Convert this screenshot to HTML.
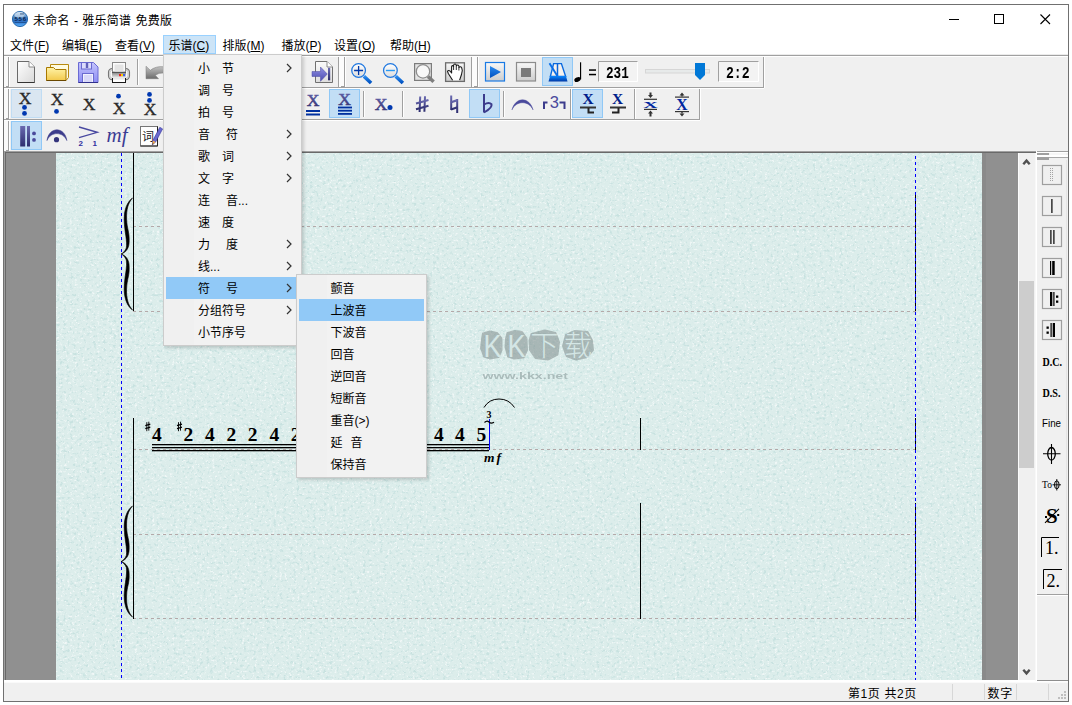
<!DOCTYPE html>
<html><head><meta charset="utf-8"><title>未命名 - 雅乐简谱 免费版</title>
<style>
*{box-sizing:border-box;margin:0;padding:0}
html,body{width:1072px;height:705px;overflow:hidden;background:#fff}
body{position:relative;font-family:"Liberation Sans","Noto Sans CJK SC",sans-serif;font-size:12px;color:#000}
#win{position:absolute;left:3px;top:4px;width:1066px;height:698px;border:1px solid #707070;background:#fff}
#root div,#root span,#root svg{position:absolute}
#root{position:absolute;left:0;top:0;width:1072px;height:705px}
.t{white-space:nowrap;line-height:16px;height:16px}
u{text-decoration:underline;text-underline-offset:1px}
i{font-style:normal;display:inline-block}
#root .menu i{position:static}
.menu{background:#f2f2f2;border:1px solid #ccc;box-shadow:2px 2px 3px rgba(0,0,0,.16)}
.mi{left:34px;white-space:nowrap;line-height:22px;height:22px}
.arr{width:6px;height:10px}
</style></head><body>
<div id="win"></div>
<div id="root">
<svg id="base" width="1072" height="705" viewBox="0 0 1072 705" style="left:0;top:0">
<defs>
<linearGradient id="gPur" x1="0" y1="0" x2="0" y2="1"><stop offset="0" stop-color="#6a6ab0"/><stop offset="1" stop-color="#2c2c6e"/></linearGradient>
<linearGradient id="gBlue" x1="0" y1="0" x2="0" y2="1"><stop offset="0" stop-color="#2a8cf0"/><stop offset="1" stop-color="#0050c0"/></linearGradient>
<linearGradient id="gPage" x1="0" y1="0" x2="1" y2="1"><stop offset="0" stop-color="#ffffff"/><stop offset="1" stop-color="#d8d8d8"/></linearGradient>
<linearGradient id="gFold" x1="0" y1="0" x2="0" y2="1"><stop offset="0" stop-color="#fff3a8"/><stop offset="1" stop-color="#f2c94c"/></linearGradient>
<linearGradient id="gSave" x1="0" y1="0" x2="0" y2="1"><stop offset="0" stop-color="#c4c4fc"/><stop offset="1" stop-color="#8c8cf4"/></linearGradient>
<linearGradient id="gGray" x1="0" y1="0" x2="0" y2="1"><stop offset="0" stop-color="#f8f8f8"/><stop offset="1" stop-color="#cdcdcd"/></linearGradient>
<linearGradient id="gPanel" x1="0" y1="0" x2="0" y2="1"><stop offset="0" stop-color="#7c7c7c"/><stop offset="1" stop-color="#e8e8e8"/></linearGradient><linearGradient id="gUndo" x1="0" y1="0" x2="0" y2="1"><stop offset="0" stop-color="#c4c4c4"/><stop offset="1" stop-color="#6c6c6c"/></linearGradient><linearGradient id="gPage2" x1="0" y1="0" x2="0" y2="1"><stop offset="0" stop-color="#fafafa"/><stop offset="1" stop-color="#dedede"/></linearGradient><linearGradient id="gPur2" x1="0" y1="0" x2="0" y2="1"><stop offset="0" stop-color="#9090e4"/><stop offset="1" stop-color="#4c4cb0"/></linearGradient><linearGradient id="gGlass" x1="0" y1="0" x2="0" y2="1"><stop offset="0" stop-color="#ffffff"/><stop offset="1" stop-color="#dcdcdc"/></linearGradient><linearGradient id="gBall2" x1="0" y1="0" x2="0" y2="1"><stop offset="0" stop-color="#b4d0ea"/><stop offset=".42" stop-color="#4c86c4"/><stop offset=".62" stop-color="#2c6cc0"/><stop offset="1" stop-color="#58b0ff"/></linearGradient><linearGradient id="gBlue2" x1="0" y1="0" x2="0" y2="1"><stop offset="0" stop-color="#0a88ff"/><stop offset="1" stop-color="#0036a4"/></linearGradient><radialGradient id="gBall" cx="0.4" cy="0.3" r="0.7"><stop offset="0" stop-color="#8ec4f0"/><stop offset="0.6" stop-color="#2f6fb8"/><stop offset="1" stop-color="#153a78"/></radialGradient>
<filter id="paperF" x="0" y="0" width="100%" height="100%"><feTurbulence type="fractalNoise" baseFrequency="0.3 0.34" numOctaves="3" seed="7" result="n"/><feColorMatrix in="n" type="matrix" values="0 0 0 0 0.56  0 0 0 0 0.75  0 0 0 0 0.74  0 0 0 5 -2.8"/></filter>
<filter id="paperL" x="0" y="0" width="100%" height="100%"><feTurbulence type="fractalNoise" baseFrequency="0.4 0.45" numOctaves="3" seed="21" result="n"/><feColorMatrix in="n" type="matrix" values="0 0 0 0 1  0 0 0 0 1  0 0 0 0 1  0 0 0 5 -2.9"/></filter>
</defs>

<rect x="4" y="55" width="1064" height="647" fill="#f0f0f0"/>
<rect x="4" y="54" width="1064" height="1" fill="#ebebeb"/>
<rect x="4" y="55" width="1064" height="1" fill="#a0a0a0"/>
<rect x="4" y="56" width="1064" height="1" fill="#ffffff"/>
<rect x="4" y="87" width="760" height="1" fill="#a0a0a0"/>
<rect x="4" y="88" width="760" height="1" fill="#ffffff"/>
<rect x="4" y="119" width="696" height="1" fill="#a0a0a0"/>
<rect x="4" y="120" width="696" height="1" fill="#ffffff"/>
<rect x="4" y="57" width="4" height="30" fill="#fafafa"/>
<rect x="8" y="57" width="1" height="30" fill="#a0a0a0"/>
<rect x="9" y="57" width="1" height="30" fill="#ffffff"/>
<rect x="6" y="86" width="2" height="1" fill="#a0a0a0"/>
<rect x="4" y="89" width="4" height="30" fill="#fafafa"/>
<rect x="8" y="89" width="1" height="30" fill="#a0a0a0"/>
<rect x="9" y="89" width="1" height="30" fill="#ffffff"/>
<rect x="6" y="118" width="2" height="1" fill="#a0a0a0"/>
<rect x="4" y="121" width="4" height="30" fill="#fafafa"/>
<rect x="8" y="121" width="1" height="30" fill="#a0a0a0"/>
<rect x="9" y="121" width="1" height="30" fill="#ffffff"/>
<rect x="6" y="150" width="2" height="1" fill="#a0a0a0"/>
<rect x="338" y="57" width="1" height="30" fill="#a0a0a0"/>
<rect x="339" y="57" width="5" height="30" fill="#fcfcfc"/>
<rect x="344" y="57" width="1" height="30" fill="#a0a0a0"/>
<rect x="345" y="57" width="1" height="30" fill="#ffffff"/>
<rect x="341" y="86" width="3" height="1" fill="#a0a0a0"/>
<rect x="471" y="57" width="1" height="30" fill="#a0a0a0"/>
<rect x="472" y="57" width="5" height="30" fill="#fcfcfc"/>
<rect x="477" y="57" width="1" height="30" fill="#a0a0a0"/>
<rect x="478" y="57" width="1" height="30" fill="#ffffff"/>
<rect x="474" y="86" width="3" height="1" fill="#a0a0a0"/>
<rect x="763" y="57" width="1" height="31" fill="#a0a0a0"/>
<rect x="764" y="57" width="1" height="31" fill="#ffffff"/>
<rect x="570" y="89" width="1" height="30" fill="#a0a0a0"/>
<rect x="571" y="89" width="1" height="30" fill="#ffffff"/>
<rect x="634" y="89" width="1" height="30" fill="#a0a0a0"/>
<rect x="635" y="89" width="1" height="30" fill="#ffffff"/>
<rect x="699" y="89" width="1" height="31" fill="#a0a0a0"/>
<rect x="700" y="89" width="1" height="31" fill="#ffffff"/>
<rect x="137" y="59" width="1" height="26" fill="#a0a0a0"/>
<rect x="138" y="59" width="1" height="26" fill="#ffffff"/>
<rect x="363" y="91" width="1" height="26" fill="#a0a0a0"/>
<rect x="364" y="91" width="1" height="26" fill="#ffffff"/>
<rect x="402" y="91" width="1" height="26" fill="#a0a0a0"/>
<rect x="403" y="91" width="1" height="26" fill="#ffffff"/>
<rect x="503" y="91" width="1" height="26" fill="#a0a0a0"/>
<rect x="504" y="91" width="1" height="26" fill="#ffffff"/>
<rect x="11.5" y="89.5" width="30" height="28" fill="#dae6f1" stroke="#c0dcf3"/>
<rect x="329.5" y="89.5" width="30" height="28" fill="#c2def5" stroke="#90c8f6"/>
<rect x="469.5" y="89.5" width="30" height="28" fill="#c2def5" stroke="#90c8f6"/>
<rect x="572.5" y="89.5" width="30" height="28" fill="#c2def5" stroke="#90c8f6"/>
<rect x="11.5" y="121.5" width="30" height="28" fill="#c2def5" stroke="#90c8f6"/>
<rect x="542.5" y="57.5" width="30" height="28" fill="#c2def5" stroke="#90c8f6"/>
<path d="M17.5 61.5h11.5l5.5 5.5v15.5h-17z" fill="url(#gPage)" stroke="#6a6a6a"/><path d="M29 61.5v5.5h5.5" fill="#fff" stroke="#8a8a8a"/><path d="M17.5 82.5h17" stroke="#333" fill="none"/>
<path d="M50.5 64.5h18v13l-2.5 3h-15.5z" fill="#fffbe0" stroke="#b88a10"/><path d="M46.5 67.5h7l2 2h10.5v11h-19.5z" fill="url(#gFold)" stroke="#a87800"/><path d="M46.5 80.5h19.5" stroke="#6a4800" fill="none"/>
<path d="M78.5 62.5h15l4.5 4.5v15.5h-19.5z" fill="url(#gSave)" stroke="#6a6ad4"/><rect x="81.5" y="62.5" width="10" height="6.5" fill="#dcdcfc" stroke="#6a6ad0"/><rect x="85.8" y="63" width="2.4" height="5" fill="#6060b8"/><rect x="82.5" y="73.5" width="11" height="9" fill="#f0f0fe" stroke="#6a6ad0"/><rect x="84" y="75" width="8" height="7" fill="#d8d8f8"/><path d="M78.5 82.5h19.5" stroke="#30308c" fill="none"/>
<rect x="108.6" y="68.6" width="20.8" height="11" rx="3.5" fill="#fafafa" stroke="#787878" stroke-width="1.3"/><rect x="110" y="70" width="18" height="8.2" rx="2.3" fill="none" stroke="#c4c4c4"/><rect x="112.5" y="62.5" width="13" height="9.5" fill="#fcfcfc" stroke="#8a8a8a"/><rect x="114.5" y="64.5" width="9" height="7" fill="#e4e4e4"/><rect x="112" y="72" width="14" height="5.6" fill="url(#gPanel)"/><rect x="112" y="72" width="14" height="1" fill="#555"/><rect x="119" y="74" width="2" height="2.2" fill="#f02020"/><rect x="121" y="74" width="2" height="2.2" fill="#f8d000"/><rect x="123" y="74" width="2" height="2.2" fill="#4060e8"/><rect x="112.5" y="78.5" width="13" height="4" fill="#fff" stroke="#1a1a1a"/><rect x="113" y="78" width="12" height="1.5" fill="#e8e8e8"/>
<path d="M146 66.2V78.7H158.5L155.3 75.2Q159 72.5 164 73V66.8Q156 65.8 150.3 70.3z" fill="url(#gUndo)" stroke="#7a7a7a" stroke-width=".5"/>
<path d="M315.5 61.5h11.5l5.5 5.5v15.5h-17z" fill="url(#gPage2)" stroke="#707070"/><path d="M327 61.5v5.5h5.5" fill="#fff" stroke="#8a8a8a"/><path d="M312 71.5h8.5v-4.5l6.8 7-6.8 7.3v-4.8h-8.5z" fill="url(#gPur2)" stroke="#4a4aa0" stroke-width=".5"/><rect x="328" y="67.8" width="2.2" height="12.5" fill="url(#gPur)"/>
<path d="M363.90000000000003 76.3l7.2 6.7" stroke="url(#gBlue)" stroke-width="3.6" stroke-linecap="butt" fill="none"/><circle cx="358.6" cy="70.5" r="6.85" fill="url(#gGlass)" stroke="#2078e0" stroke-width="1.25"/><path d="M354.1 70.5h9M358.6 66v9" stroke="#0038a8" stroke-width="1.3" fill="none"/>
<path d="M395.7 76.3l7.2 6.7" stroke="url(#gBlue)" stroke-width="3.6" stroke-linecap="butt" fill="none"/><circle cx="390.4" cy="70.5" r="6.85" fill="url(#gGlass)" stroke="#2078e0" stroke-width="1.25"/><path d="M385.9 70.5h9" stroke="#2a9af4" stroke-width="1.4" fill="none"/>
<rect x="414.6" y="63.6" width="16.8" height="16.8" fill="#e4e4e4" stroke="#7c7c7c" stroke-width="1.2"/><path d="M428 76.5l5.6 5.2" stroke="#7e7e7e" stroke-width="3.6" fill="none"/><circle cx="423" cy="71.4" r="6.7" fill="#f8f8f8" stroke="#8e8e8e" stroke-width="1.3"/>
<rect x="445.6" y="62.8" width="18.8" height="18.6" fill="url(#gGray)" stroke="#6c6c6c" stroke-width="1.3"/><path d="M452.6 80.2L448.3 73.5L447.5 71.2Q448.5 69.8 450 71L451.6 73V66.6Q452.4 64.8 453.6 66.4V65Q455 63 456.3 65V65.8Q457.6 64 458.9 66V67.5Q460.4 66 461.7 67.8L462.3 70.5L461.5 74.5L459.6 80.2" fill="#fff" stroke="#1a1a1a" stroke-width="1.1" stroke-linejoin="round"/><path d="M453.6 66.4V70M456.3 65.8V70M458.9 67.5V70.5" stroke="#1a1a1a" stroke-width=".9" fill="none"/>
<rect x="485.5" y="62.5" width="19" height="18.5" fill="url(#gGray)" stroke="#1a7ae4" stroke-width="1.2"/><path d="M490 66l11 6-11 6z" fill="url(#gBlue)"/>
<rect x="516.5" y="62.5" width="19" height="18.5" fill="url(#gGray)" stroke="#8c8c8c" stroke-width="1.2"/><rect x="521" y="68" width="10" height="9" fill="#7a7a7a"/>
<path d="M553.6 63.6h7.8l4.2 12.8h-15.2z" fill="#f6f2ee" stroke="#0a6ae0" stroke-width="1.4"/><path d="M557.5 63.5v13" stroke="#0a64d8" stroke-width="1.5"/><path d="M550 76h16l1.5 5.6h-19z" fill="url(#gBlue2)"/><path d="M549.5 63.3l8 13" stroke="#0a6ee8" stroke-width="1.9"/>
<rect x="580" y="62.3" width="1.15" height="17" fill="#000"/><ellipse cx="577.5" cy="79.5" rx="3.3" ry="2.25" transform="rotate(-25 577.5 79.5)" fill="#000"/><rect x="589" y="69.3" width="7" height="1.5" fill="#000"/><rect x="589" y="73.8" width="7" height="1.5" fill="#000"/>
<rect x="598" y="61" width="40" height="21" fill="#f3f3f3"/><path d="M598.5 82V61.5H638" stroke="#a0a0a0" fill="none"/><path d="M598.5 81.5H637.5V61.5" stroke="#fff" fill="none"/>
<rect x="718" y="61" width="41" height="21" fill="#f3f3f3"/><path d="M718.5 82V61.5H759" stroke="#a0a0a0" fill="none"/><path d="M718.5 81.5H758.5V61.5" stroke="#fff" fill="none"/>
<rect x="645.5" y="69.5" width="64" height="3.5" fill="#e7eaea" stroke="#d6d6d6"/><path d="M695 63h10v12l-5 5-5-5z" fill="#0078d7"/>
<text transform="translate(25,103.8) scale(1.1,1)" font-family="Liberation Serif,serif" font-size="16" font-weight="normal" text-anchor="middle" fill="#2a2a2a" stroke="#2a2a2a" stroke-width="0.35" >X</text>
<circle cx="24.5" cy="107.4" r="2.4" fill="#0038b0"/>
<circle cx="24.5" cy="113.4" r="2.4" fill="#0038b0"/>
<text transform="translate(57,104.8) scale(1.1,1)" font-family="Liberation Serif,serif" font-size="16" font-weight="normal" text-anchor="middle" fill="#2a2a2a" stroke="#2a2a2a" stroke-width="0.35" >X</text>
<circle cx="56.5" cy="111.4" r="2.4" fill="#0038b0"/>
<text transform="translate(89,109.6) scale(1.1,1)" font-family="Liberation Serif,serif" font-size="16" font-weight="normal" text-anchor="middle" fill="#2a2a2a" stroke="#2a2a2a" stroke-width="0.35" >X</text>
<text transform="translate(119,114) scale(1.1,1)" font-family="Liberation Serif,serif" font-size="16" font-weight="normal" text-anchor="middle" fill="#2a2a2a" stroke="#2a2a2a" stroke-width="0.35" >X</text>
<circle cx="118.5" cy="96.2" r="2.4" fill="#0038b0"/>
<text transform="translate(150,115) scale(1.1,1)" font-family="Liberation Serif,serif" font-size="16" font-weight="normal" text-anchor="middle" fill="#2a2a2a" stroke="#2a2a2a" stroke-width="0.35" >X</text>
<circle cx="149.5" cy="94.4" r="2.4" fill="#0038b0"/>
<circle cx="149.5" cy="100.4" r="2.4" fill="#0038b0"/>
<text transform="translate(313,105.5) scale(1,1)" font-family="Liberation Serif,serif" font-size="17.5" font-weight="normal" text-anchor="middle" fill="url(#gPur)" stroke="url(#gPur)" stroke-width="0.55" >X</text>
<rect x="306" y="110" width="14" height="2" fill="#0030a0"/><rect x="306" y="113.5" width="14" height="2" fill="#0030a0"/>
<text transform="translate(344.5,105) scale(1,1)" font-family="Liberation Serif,serif" font-size="17.5" font-weight="normal" text-anchor="middle" fill="url(#gPur)" stroke="url(#gPur)" stroke-width="0.55" >X</text>
<rect x="338" y="106.6" width="14" height="1.8" fill="#0030a0"/><rect x="338" y="109.8" width="14" height="1.8" fill="#0030a0"/><rect x="338" y="113" width="14" height="1.8" fill="#0030a0"/>
<text transform="translate(381,109.6) scale(1,1)" font-family="Liberation Serif,serif" font-size="17.5" font-weight="normal" text-anchor="middle" fill="url(#gPur)" stroke="url(#gPur)" stroke-width="0.55" >X</text>
<circle cx="390" cy="107.4" r="2.5" fill="#0038b0"/>
<g stroke="url(#gPur)" stroke-width="2" fill="none"><path d="M420.2 96.5l-.6 15.5M425 96.2l-.6 15.5"/><path d="M416 103.5l12.5-3.5M416 109.3l12.5-3.5" stroke-width="2.2"/></g>
<g stroke="url(#gPur)" stroke-width="2" fill="none"><path d="M451.2 95.5v14.5M457.2 99v14"/><path d="M451 102.3l6.4-2.2M451 109.5l6.4-2.2" stroke-width="2.2"/></g>
<path d="M484 94v18.5" stroke="#3c3c8c" stroke-width="2" fill="none"/><path d="M484 104.5q5-3 7.5-.3q1 3.5-7.5 8.3" stroke="#3c3c8c" stroke-width="2" fill="none"/>
<path d="M512 109.8C515.5 96.5 529.5 96.5 533 109.8C529 100.3 516 100.3 512 109.8z" fill="#4a4a9c" stroke="#4a4a9c" stroke-width=".5"/>
<path d="M544 109v-6.5h3.5M559.5 102.5h5v6.5" stroke="#3c3c8c" stroke-width="2" fill="none"/>
<text x="554.3" y="108" font-family="Liberation Sans,sans-serif" font-size="16.5" text-anchor="middle" fill="#4a4a9c">3</text>
<text transform="translate(588,104) scale(1,1)" font-family="Liberation Serif,serif" font-size="15.5" font-weight="bold" text-anchor="middle" fill="#00208a" stroke="#00208a" stroke-width="0" >X</text>
<rect x="580" y="106.5" width="16" height="2" fill="#333"/><path d="M588.5 108v4.5h5.5" stroke="#222" stroke-width="2" fill="none"/>
<text transform="translate(617.6,104) scale(1,1)" font-family="Liberation Serif,serif" font-size="15.5" font-weight="bold" text-anchor="middle" fill="#00208a" stroke="#00208a" stroke-width="0" >X</text>
<rect x="610" y="106.5" width="16" height="2" fill="#333"/><path d="M618.5 108v4.5h-6.5" stroke="#222" stroke-width="2" fill="none"/>
<rect x="644" y="98.7" width="13" height="1.2" fill="#333"/><rect x="644" y="108.8" width="13" height="1.2" fill="#333"/><text x="650.5" y="115.8" font-family="Liberation Serif,serif" font-size="16" font-weight="bold" text-anchor="middle" fill="#0028a0" transform="translate(-162.6,47.8) scale(1.25,0.52)">X</text><path d="M649.5 92.5h2v2.5h1.5l-2.5 3-2.5-3h1.5zM649.5 116.5h2v-3h1.5l-2.5-3-2.5 3h1.5z" fill="#333"/>
<rect x="675" y="96.5" width="14" height="1.2" fill="#333"/><rect x="675" y="111" width="14" height="1.2" fill="#333"/><text x="682" y="110.3" font-family="Liberation Serif,serif" font-size="17.5" font-weight="bold" text-anchor="middle" fill="#0028a0" transform="translate(68.2,0) scale(0.9,1)">X</text><path d="M682 92.5l2.5 3h-5zM682 116.5l2.5-3h-5z" fill="#333"/><rect x="681.3" y="95" width="1.4" height="1.5" fill="#333"/><rect x="681.3" y="112" width="1.4" height="1.5" fill="#333"/>
<rect x="20.2" y="126" width="5" height="20.5" fill="url(#gPur)"/><rect x="27" y="126" width="3" height="20.5" fill="url(#gPur)"/>
<circle cx="34" cy="133.4" r="1.9" fill="#4a4a9c"/>
<circle cx="34" cy="139.9" r="1.9" fill="#4a4a9c"/>
<path d="M47 140.5C49 126.3 64.8 126.3 66.8 140.5C63 131.3 50.8 131.3 47 140.5z" fill="#3c3c8c" stroke="#3c3c8c" stroke-width=".6"/>
<circle cx="56.5" cy="139.7" r="2.6" fill="#34347c"/>
<path d="M79 127l18.3 5.3-18.3 5.3" stroke="#4848a0" stroke-width="1.35" fill="none"/>
<text x="78.5" y="146.2" font-family="Liberation Sans,sans-serif" font-size="8" font-weight="bold" fill="#3030a0">2</text><text x="92.5" y="146.2" font-family="Liberation Sans,sans-serif" font-size="8" font-weight="bold" fill="#3030a0">1</text>
<text x="106.5" y="142" font-family="Liberation Serif,serif" font-size="21" font-style="italic" fill="#3c3c94">mf</text>
<rect x="140.5" y="126.5" width="17" height="19.5" fill="#fff" stroke="#777"/><path d="M140.5 146h17v-19.5" stroke="#222" fill="none"/><text x="142" y="141" font-family="Noto Sans CJK SC,sans-serif" font-size="12" fill="#222">词</text><path d="M159.8 127.3l2.8 1.6-7 13.2-3.3 2.8.5-4.3z" fill="#6a6ad0" stroke="#34349a" stroke-width=".6"/><path d="M152.3 144.9l.5-4.3 2.8 1.5z" fill="#f0a848"/><path d="M152.3 144.9l.2-1.7 1.1.6z" fill="#333"/>
<rect x="4" y="151" width="1032" height="1" fill="#a0a0a0"/>
<rect x="5" y="152" width="1031" height="1" fill="#696969"/>
<rect x="4" y="151" width="1" height="530" fill="#a0a0a0"/>
<rect x="5" y="152" width="1" height="528" fill="#696969"/>
<rect x="6" y="153" width="1012" height="527" fill="#909090"/>
<rect x="982" y="153" width="4" height="527" fill="#8a8a8a"/>
<rect x="56" y="153" width="926" height="527" fill="#dcedeb"/>
<rect x="56" y="153" width="926" height="527" filter="url(#paperF)" opacity="0.85"/>
<rect x="56" y="153" width="926" height="527" filter="url(#paperL)" opacity="0.6"/>
<rect x="4" y="680" width="1064" height="1" fill="#fff"/>
<rect x="4" y="681" width="1064" height="1" fill="#fff"/>
<rect x="4" y="682" width="1064" height="1" fill="#fafafa"/>
<rect x="1037" y="680" width="31" height="1" fill="#8e8e8e"/>
<path d="M133 226.5H916" stroke="#b4a9a9" stroke-dasharray="3 3" fill="none"/>
<path d="M133 311.5H916" stroke="#b4a9a9" stroke-dasharray="3 3" fill="none"/>
<path d="M133 449.5H916" stroke="#b4a9a9" stroke-dasharray="3 3" fill="none"/>
<path d="M133 534.5H916" stroke="#b4a9a9" stroke-dasharray="3 3" fill="none"/>
<path d="M133 618.5H916" stroke="#b4a9a9" stroke-dasharray="3 3" fill="none"/>
<rect x="133" y="153" width="1" height="158" fill="#000"/>
<rect x="133" y="418" width="1" height="201" fill="#000"/>
<rect x="915" y="192" width="1" height="119" fill="#000"/>
<rect x="915" y="418" width="1" height="32" fill="#000"/>
<rect x="915" y="503" width="1" height="116" fill="#000"/>
<rect x="640" y="418" width="1" height="32" fill="#000"/>
<rect x="640" y="503" width="1" height="116" fill="#000"/>
<path d="M121.5 153V680" stroke="#0000ff" stroke-dasharray="3 3" fill="none"/>
<path d="M915.5 156V680" stroke="#0000ff" stroke-dasharray="3 3" fill="none"/>
<path d="M132.5 198 C127 202 124 210 124.2 220 C124.5 232 127.5 241 126.3 248 C125.3 251 123 253 121.2 254 C124.5 252.8 128.3 250 129 244 C130 232 127 230 126.6 219 C126.3 210 128 203 132.5 198z M132.5 310 C127 306 124 298 124.2 288 C124.5 276 127.5 267 126.3 260 C125.3 257 123 255 121.2 254 C124.5 255.2 128.3 258 129 264 C130 276 127 278 126.6 289 C126.3 298 128 305 132.5 310z" fill="#000" stroke="#000" stroke-width=".6"/>
<path d="M132.5 506 C127 510 124 518 124.2 528 C124.5 539.5 127.5 548.5 126.3 555.5 C125.3 558.5 123 560.5 121.2 561.5 C124.5 560.3 128.3 557.5 129 551.5 C130 539.5 127 538 126.6 527 C126.3 518 128 511 132.5 506z M132.5 617 C127 613 124 605 124.2 595 C124.5 583.5 127.5 574.5 126.3 567.5 C125.3 564.5 123 562.5 121.2 561.5 C124.5 562.7 128.3 565.5 129 571.5 C130 583.5 127 585 126.6 596 C126.3 605 128 612 132.5 617z" fill="#000" stroke="#000" stroke-width=".6"/>
<text x="152" y="440.5" font-family="Liberation Serif,serif" font-size="19.5" font-weight="bold" fill="#000">4</text>
<text x="183.5" y="440.5" font-family="Liberation Serif,serif" font-size="19.5" font-weight="bold" fill="#000">2</text>
<text x="205" y="440.5" font-family="Liberation Serif,serif" font-size="19.5" font-weight="bold" fill="#000">4</text>
<text x="226.5" y="440.5" font-family="Liberation Serif,serif" font-size="19.5" font-weight="bold" fill="#000">2</text>
<text x="247.8" y="440.5" font-family="Liberation Serif,serif" font-size="19.5" font-weight="bold" fill="#000">2</text>
<text x="269.5" y="440.5" font-family="Liberation Serif,serif" font-size="19.5" font-weight="bold" fill="#000">4</text>
<text x="290.8" y="440.5" font-family="Liberation Serif,serif" font-size="19.5" font-weight="bold" fill="#000">2</text>
<text x="434" y="440.5" font-family="Liberation Serif,serif" font-size="19.5" font-weight="bold" fill="#000">4</text>
<text x="455" y="440.5" font-family="Liberation Serif,serif" font-size="19.5" font-weight="bold" fill="#000">4</text>
<text x="476.5" y="440.5" font-family="Liberation Serif,serif" font-size="19.5" font-weight="bold" fill="#000">5</text>
<g stroke="#000" fill="none"><path d="M146.8 422.2v9M148.8 421.7v9" stroke-width=".9"/><path d="M145.3 425.7l5-1.5M145.3 428.7l5-1.5" stroke-width="1.3"/></g>
<g stroke="#000" fill="none"><path d="M178.5 422.2v9M180.5 421.7v9" stroke-width=".9"/><path d="M177 425.7l5-1.5M177 428.7l5-1.5" stroke-width="1.3"/></g>
<rect x="152" y="444" width="337" height="1.3" fill="#000"/>
<rect x="152" y="447" width="337" height="1.3" fill="#000"/>
<rect x="152" y="450" width="337" height="1.3" fill="#000"/>
<rect x="489" y="419" width="1" height="31" fill="#0000ff"/>
<path d="M484 407.5q5-8.5 15-8.5t15.5 8.5" stroke="#000" stroke-width="1" fill="none"/>
<text x="486.5" y="417.8" font-family="Liberation Serif,serif" font-size="10" font-weight="bold" fill="#000">3</text>
<path d="M484.5 422.5q2.5-2.5 4.5-.5t5 .2" stroke="#000" stroke-width="1.2" fill="none"/>
<text x="484" y="462" font-family="Liberation Serif,serif" font-size="13.5" font-weight="bold" font-style="italic" fill="#000" letter-spacing="2">mf</text>
<g fill="#7f8c8c" opacity="0.55" stroke="#7f8c8c" stroke-width="2" stroke-linejoin="round"><path d="M483 333.5L490 331.5L497 333L501.5 338.5L501.5 350L498.5 357L490 358.5L484 356.5L481 348L482 339z"/><path d="M507.5 333L515 331L522 332L526.5 338.5L527 350L523.5 357.5L514 358.5L508 356.5L505.5 347L506 338.5z"/><path d="M531.5 334L545 330.5L555.5 333L559 342L557.5 354.5L548 359.5L535.5 358L530 350L529.5 340.5z"/><path d="M566 335L575 331L587.5 332L592 340.5L593 350L587.5 357L576 359.5L566.5 356L563 346z"/></g>
<g fill="#d4e6e5" font-family="Liberation Sans,Noto Sans CJK SC,sans-serif"><text x="483.5" y="356.5" font-size="32" textLength="18" lengthAdjust="spacingAndGlyphs">K</text><text x="507.5" y="356.5" font-size="32" textLength="18" lengthAdjust="spacingAndGlyphs">K</text><text x="530.5" y="355.5" font-size="28" font-weight="300">下</text><text x="564" y="355.5" font-size="28" font-weight="300">载</text></g>
<text x="482.5" y="378.8" font-family="Liberation Sans,sans-serif" font-size="9.5" font-weight="bold" fill="#8a9c9c" opacity=".6" textLength="85.5" lengthAdjust="spacingAndGlyphs">www.kkx.net</text>
<rect x="1018" y="153" width="18" height="527" fill="#f0f0f0"/><rect x="1018" y="153" width="1" height="527" fill="#fcfcfc"/>
<rect x="1019" y="281" width="15" height="187" fill="#cdcdcd"/>
<path d="M1023.3 164.2L1026.5 160.6L1029.7 164.2M1023.3 669.8L1026.5 673.4L1029.7 669.8" stroke="#505050" stroke-width="2.4" stroke-linejoin="miter" fill="none"/>
<rect x="1036" y="151" width="1" height="530" fill="#fff"/>
<rect x="1035" y="153" width="1" height="528" fill="#f8f8f8"/>
<rect x="1037" y="151" width="31" height="1" fill="#a0a0a0"/>
<rect x="1037" y="152" width="31" height="1" fill="#fff"/>
<rect x="1037" y="153" width="12" height="2" fill="#a0a0a0"/><rect x="1037" y="155" width="31" height="2" fill="#fff"/><rect x="1037" y="157" width="12" height="3" fill="#a0a0a0"/><rect x="1049" y="157" width="19" height="1" fill="#a8a8a8"/><rect x="1050" y="153" width="16" height="2" fill="#f6f6f6"/>
<rect x="1037" y="594" width="31" height="1" fill="#a0a0a0"/>
<rect x="1037" y="595" width="31" height="1" fill="#fff"/>
<rect x="1066" y="160" width="1" height="434" fill="#e4e4e4"/>
<rect x="1042.5" y="165.5" width="19" height="19" fill="#f0f0f0" stroke="#9e9e9e" stroke-width="1.2"/>
<rect x="1042.5" y="196.5" width="19" height="19" fill="#f0f0f0" stroke="#9e9e9e" stroke-width="1.2"/>
<rect x="1042.5" y="227.5" width="19" height="19" fill="#f0f0f0" stroke="#9e9e9e" stroke-width="1.2"/>
<rect x="1042.5" y="258.5" width="19" height="19" fill="#f0f0f0" stroke="#9e9e9e" stroke-width="1.2"/>
<rect x="1042.5" y="289.5" width="19" height="19" fill="#f0f0f0" stroke="#9e9e9e" stroke-width="1.2"/>
<rect x="1042.5" y="320.5" width="19" height="19" fill="#f0f0f0" stroke="#9e9e9e" stroke-width="1.2"/>
<path d="M1050.5 168v14M1052.5 168v14" stroke="#a4a4a4" stroke-dasharray="1 1" fill="none"/>
<rect x="1051.3" y="199" width="1.2" height="14" fill="#000"/>
<rect x="1050.3" y="230" width="1.2" height="14" fill="#000"/><rect x="1053.3" y="230" width="1.2" height="14" fill="#000"/>
<rect x="1050" y="261" width="1.2" height="14" fill="#000"/><rect x="1052.2" y="261" width="2.5" height="14" fill="#000"/>
<rect x="1050" y="292" width="2.3" height="14" fill="#000"/><rect x="1053.3" y="292" width="1.2" height="14" fill="#000"/><rect x="1056" y="295.5" width="2.3" height="2.3" fill="#000"/><rect x="1056" y="300.5" width="2.3" height="2.3" fill="#000"/>
<rect x="1052.7" y="323" width="2.3" height="14" fill="#000"/><rect x="1050.5" y="323" width="1.2" height="14" fill="#000"/><rect x="1046.5" y="326.5" width="2.3" height="2.3" fill="#000"/><rect x="1046.5" y="331.5" width="2.3" height="2.3" fill="#000"/>
<text x="1042.5" y="366.3" font-family="Liberation Serif,serif" font-size="12.5" font-weight="bold" fill="#000" textLength="19.5" lengthAdjust="spacingAndGlyphs">D.C.</text>
<text x="1042.5" y="397.3" font-family="Liberation Serif,serif" font-size="12.5" font-weight="bold" fill="#000" textLength="18" lengthAdjust="spacingAndGlyphs">D.S.</text>
<text x="1042" y="427.3" font-family="Liberation Sans,sans-serif" font-size="10.5" fill="#000" textLength="19" lengthAdjust="spacingAndGlyphs">Fine</text>
<ellipse cx="1051.5" cy="453.8" rx="3.8" ry="6.3" fill="none" stroke="#000" stroke-width="1.3"/><path d="M1043 453.8h17.5M1051.5 444v20" stroke="#000" stroke-width="1.1" fill="none"/>
<text x="1042" y="488" font-family="Liberation Serif,serif" font-size="9.5" fill="#000">To</text><ellipse cx="1056.8" cy="484.8" rx="2.3" ry="4" fill="none" stroke="#000" stroke-width="1"/><path d="M1052.5 484.8h8.5M1056.8 479v11.5" stroke="#000" stroke-width=".9" fill="none"/>
<text x="1046" y="522.8" font-family="Liberation Serif,serif" font-size="21" font-weight="bold" fill="#000">S</text><path d="M1045 522.8l14-14" stroke="#000" stroke-width="1.1"/><rect x="1045" y="516" width="2" height="2" fill="#000"/><rect x="1057.2" y="514" width="2" height="2" fill="#000"/>
<path d="M1041.5 557v-19.5h17.5" stroke="#000" fill="none"/><text x="1045" y="554" font-family="Liberation Serif,serif" font-size="18" fill="#000">1.</text>
<path d="M1043.5 589v-19.5h18.5" stroke="#000" fill="none"/><text x="1046.5" y="587" font-family="Liberation Serif,serif" font-size="18" fill="#000">2.</text>
<rect x="952" y="684" width="1" height="16" fill="#d7d7d7"/>
<rect x="984" y="684" width="1" height="16" fill="#d7d7d7"/>
<rect x="1016" y="684" width="1" height="16" fill="#d7d7d7"/>
<rect x="1048" y="684" width="1" height="16" fill="#d7d7d7"/>
<rect x="1064" y="697" width="2" height="2" fill="#bfbfbf"/>
<rect x="1061" y="697" width="2" height="2" fill="#bfbfbf"/>
<rect x="1058" y="697" width="2" height="2" fill="#bfbfbf"/>
<rect x="1064" y="694" width="2" height="2" fill="#bfbfbf"/>
<rect x="1061" y="694" width="2" height="2" fill="#bfbfbf"/>
<rect x="1064" y="691" width="2" height="2" fill="#bfbfbf"/>
<circle cx="20" cy="19" r="7.6" fill="url(#gBall2)" stroke="#2a6cae" stroke-width="1"/><ellipse cx="19.5" cy="14.8" rx="5" ry="3" fill="#fff" opacity=".45"/><text x="14.5" y="21.3" font-family="Liberation Sans,sans-serif" font-size="6" font-weight="bold" fill="#0a2450" textLength="11.5" lengthAdjust="spacing">556</text><rect x="20" y="13.5" width="4" height=".9" fill="#30507a"/><rect x="14.5" y="22" width="11.5" height=".7" fill="#16407c"/>
<path d="M949 19.5h10" stroke="#000" fill="none"/><rect x="994.5" y="14.5" width="9" height="9" fill="none" stroke="#000"/><path d="M1040.5 14.5l9.5 9.5M1050 14.5l-9.5 9.5" stroke="#000" stroke-width="1.1" fill="none"/></svg>
<span class="t" style="left:33px;top:13px;word-spacing:.6px;letter-spacing:.25px">未命名 - 雅乐简谱 免费版</span>
<div style="left:163px;top:35px;width:53px;height:19px;background:#cce4f7;border:1px solid #99d1ff"></div>
<span class="t" style="left:10px;top:38px;">文件(<u>F</u>)</span>
<span class="t" style="left:62px;top:38px;">编辑(<u>E</u>)</span>
<span class="t" style="left:115px;top:38px;">查看(<u>V</u>)</span>
<span class="t" style="left:168.5px;top:38px;">乐谱(<u>C</u>)</span>
<span class="t" style="left:222.5px;top:38px;">排版(<u>M</u>)</span>
<span class="t" style="left:281.5px;top:38px;">播放(<u>P</u>)</span>
<span class="t" style="left:334px;top:38px;">设置(<u>O</u>)</span>
<span class="t" style="left:390px;top:38px;">帮助(<u>H</u>)</span>
<span class="t" style="left:848px;top:686px;letter-spacing:.6px">第1页 共2页</span>
<span class="t" style="left:987.5px;top:686px;letter-spacing:.8px">数字</span>
<span class="t" style="left:606px;top:66px;font-family:'Liberation Mono',monospace;font-weight:bold;font-size:16px;transform:scaleX(.79);transform-origin:0 0">231</span>
<span class="t" style="left:726px;top:66px;font-family:'Liberation Mono',monospace;font-weight:bold;font-size:16px;transform:scaleX(.82);transform-origin:0 0">2:2</span>
<div class="menu" style="left:163px;top:54px;width:139px;height:292px"><div style="left:0;top:0;width:30px;height:290px;background:#f0f0f0"></div><div style="left:2px;top:222px;width:133px;height:22px;background:#91c9f7"></div><span class="mi" style="top:3px">小<i style="margin-left:12px"></i>节</span><svg class="arr" style="left:122px;top:8px" viewBox="0 0 6 10"><path d="M1 1l4 4-4 4" stroke="#333" stroke-width="1.200" fill="none"/></svg><span class="mi" style="top:25px">调<i style="margin-left:12px"></i>号</span><span class="mi" style="top:47px">拍<i style="margin-left:12px"></i>号</span><span class="mi" style="top:69px">音<i style="margin-left:16px"></i>符</span><svg class="arr" style="left:122px;top:74px" viewBox="0 0 6 10"><path d="M1 1l4 4-4 4" stroke="#333" stroke-width="1.200" fill="none"/></svg><span class="mi" style="top:91px">歌<i style="margin-left:12px"></i>词</span><svg class="arr" style="left:122px;top:96px" viewBox="0 0 6 10"><path d="M1 1l4 4-4 4" stroke="#333" stroke-width="1.200" fill="none"/></svg><span class="mi" style="top:113px">文<i style="margin-left:12px"></i>字</span><svg class="arr" style="left:122px;top:118px" viewBox="0 0 6 10"><path d="M1 1l4 4-4 4" stroke="#333" stroke-width="1.200" fill="none"/></svg><span class="mi" style="top:135px">连<i style="margin-left:16px"></i>音...</span><span class="mi" style="top:157px">速<i style="margin-left:12px"></i>度</span><span class="mi" style="top:179px">力<i style="margin-left:16px"></i>度</span><svg class="arr" style="left:122px;top:184px" viewBox="0 0 6 10"><path d="M1 1l4 4-4 4" stroke="#333" stroke-width="1.200" fill="none"/></svg><span class="mi" style="top:201px">线...</span><svg class="arr" style="left:122px;top:206px" viewBox="0 0 6 10"><path d="M1 1l4 4-4 4" stroke="#333" stroke-width="1.200" fill="none"/></svg><span class="mi" style="top:223px">符<i style="margin-left:16px"></i>号</span><svg class="arr" style="left:122px;top:228px" viewBox="0 0 6 10"><path d="M1 1l4 4-4 4" stroke="#333" stroke-width="1.200" fill="none"/></svg><span class="mi" style="top:245px">分组符号</span><svg class="arr" style="left:122px;top:250px" viewBox="0 0 6 10"><path d="M1 1l4 4-4 4" stroke="#333" stroke-width="1.200" fill="none"/></svg><span class="mi" style="top:267px">小节序号</span></div>
<div class="menu" style="left:296px;top:274px;width:131px;height:204px"><div style="left:0;top:0;width:30px;height:202px;background:#f0f0f0"></div><div style="left:2px;top:24px;width:125px;height:22px;background:#91c9f7"></div><span class="mi" style="left:33.5px;top:3px">颤音</span><span class="mi" style="left:33.5px;top:25px">上波音</span><span class="mi" style="left:33.5px;top:47px">下波音</span><span class="mi" style="left:33.5px;top:69px">回音</span><span class="mi" style="left:33.5px;top:91px">逆回音</span><span class="mi" style="left:33.5px;top:113px">短断音</span><span class="mi" style="left:33.5px;top:135px">重音(&gt;)</span><span class="mi" style="left:33.5px;top:157px">延<i style="margin-left:8px"></i>音</span><span class="mi" style="left:33.5px;top:179px">保持音</span></div>
</div>
<div style="position:absolute;left:3px;top:4px;width:1066px;height:698px;border:1px solid #707070;pointer-events:none"></div>
</body></html>
